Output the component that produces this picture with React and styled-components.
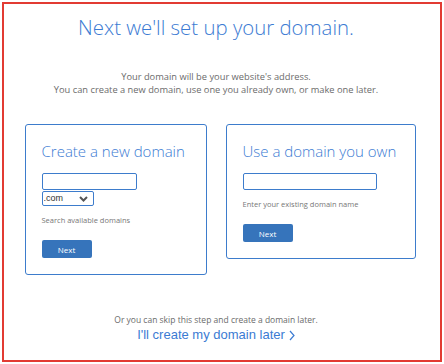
import React from "react";
import styled, { createGlobalStyle } from "styled-components";

const GlobalStyle = createGlobalStyle`
  html, body {
    margin: 0;
    padding: 0;
    background: #ffffff;
  }
  body {
    font-family: "Open Sans", "Liberation Sans", sans-serif;
  }
`;

const Frame = styled.div`
  box-sizing: border-box;
  margin: 2px;
  width: 440px;
  height: 360px;
  border: 2px solid #e23b33;
  padding: 9px 12px 0 0;
  display: flex;
  flex-direction: column;
  align-items: center;
`;

const Heading = styled.h1`
  margin: 0;
  font-size: 20.4px;
  line-height: 28px;
  font-weight: 300;
  color: #3b7bd3;
`;

const Intro = styled.p`
  margin: 29px 0 0;
  font-size: 9.3px;
  line-height: 13px;
  color: #6b6b6b;
  text-align: center;
`;

const CardsRow = styled.div`
  display: flex;
  align-items: flex-start;
  gap: 19px;
  margin-top: 28px;
  padding-left: 8px;
`;

const Card = styled.section`
  box-sizing: border-box;
  width: ${(p) => p.$width}px;
  border: 1.5px solid #3d7ccc;
  border-radius: 3px;
  padding: 16px 16px 16px;
  display: flex;
  flex-direction: column;
  align-items: flex-start;
`;

const CardTitle = styled.h2`
  margin: 0;
  font-size: 15px;
  line-height: 20px;
  font-weight: 300;
  color: #3b7bd3;
  white-space: nowrap;
`;

const TextInput = styled.input`
  display: block;
  box-sizing: border-box;
  margin: 12px 0 0;
  width: ${(p) => p.$width}px;
  height: 17px;
  border: 1px solid #3d7ccc;
  border-radius: 2px;
  padding: 0 4px;
  font-size: 9px;
  outline: none;
`;

const SelectWrap = styled.div`
  position: relative;
  margin-top: 1px;
  width: 52px;
  height: 15px;
  line-height: 0;
`;

const Select = styled.select`
  display: block;
  box-sizing: border-box;
  appearance: none;
  width: 100%;
  height: 100%;
  margin: 0;
  border: 1px solid #3d7ccc;
  border-radius: 2px;
  padding: 0 0 0 1px;
  background: #fff;
  font-family: "Liberation Sans", Arial, sans-serif;
  font-size: 9px;
  line-height: 13px;
  color: #333;
  outline: none;
`;

const Chevron = styled.svg`
  position: absolute;
  right: 6px;
  top: 5px;
  pointer-events: none;
`;

const Hint = styled.p`
  margin: 9px 0 0;
  font-size: 7.5px;
  line-height: 10px;
  color: #777;
  white-space: nowrap;
`;

const Button = styled.button`
  display: block;
  margin-top: 15px;
  width: 50px;
  height: 18px;
  border: none;
  border-radius: 2px;
  background: #3674bb;
  color: #fff;
  font-family: "Open Sans", sans-serif;
  font-size: 8px;
  padding: 0;
  cursor: pointer;
`;

const Footer = styled.div`
  margin-top: auto;
  margin-bottom: 17px;
  display: flex;
  flex-direction: column;
  align-items: center;
`;

const SkipNote = styled.p`
  margin: 0;
  font-size: 8.5px;
  line-height: 11px;
  color: #6b6b6b;
`;

const LaterLink = styled.a`
  display: flex;
  align-items: center;
  gap: 4px;
  margin-top: 2px;
  font-family: "Liberation Sans", Arial, sans-serif;
  font-size: 13px;
  line-height: 16px;
  color: #3b7bd3;
  text-decoration: none;
  cursor: pointer;
`;

const App = () => (
  <>
    <GlobalStyle />
    <Frame>
      <Heading>Next we'll set up your domain.</Heading>
      <Intro>
        Your domain will be your website's address.
        <br />
        You can create a new domain, use one you already own, or make one later.
      </Intro>
      <CardsRow>
        <Card $width={182}>
          <CardTitle>Create a new domain</CardTitle>
          <TextInput $width={95} />
          <SelectWrap>
            <Select defaultValue=".com">
              <option>.com</option>
              <option>.net</option>
              <option>.org</option>
            </Select>
            <Chevron width="9" height="6" viewBox="0 0 9 6">
              <polyline points="1,1 4.5,4.5 8,1" fill="none" stroke="#555" strokeWidth="2" />
            </Chevron>
          </SelectWrap>
          <Hint>Search available domains</Hint>
          <Button>Next</Button>
        </Card>
        <Card $width={190}>
          <CardTitle>Use a domain you own</CardTitle>
          <TextInput $width={134} />
          <Hint>Enter your existing domain name</Hint>
          <Button>Next</Button>
        </Card>
      </CardsRow>
      <Footer>
        <SkipNote>Or you can skip this step and create a domain later.</SkipNote>
        <LaterLink>
          I'll create my domain later
          <svg width="6" height="11" viewBox="0 0 6 11">
            <polyline points="1,1 5,5.5 1,10" fill="none" stroke="#3b7bd3" strokeWidth="1.2" />
          </svg>
        </LaterLink>
      </Footer>
    </Frame>
  </>
);

export default App;
